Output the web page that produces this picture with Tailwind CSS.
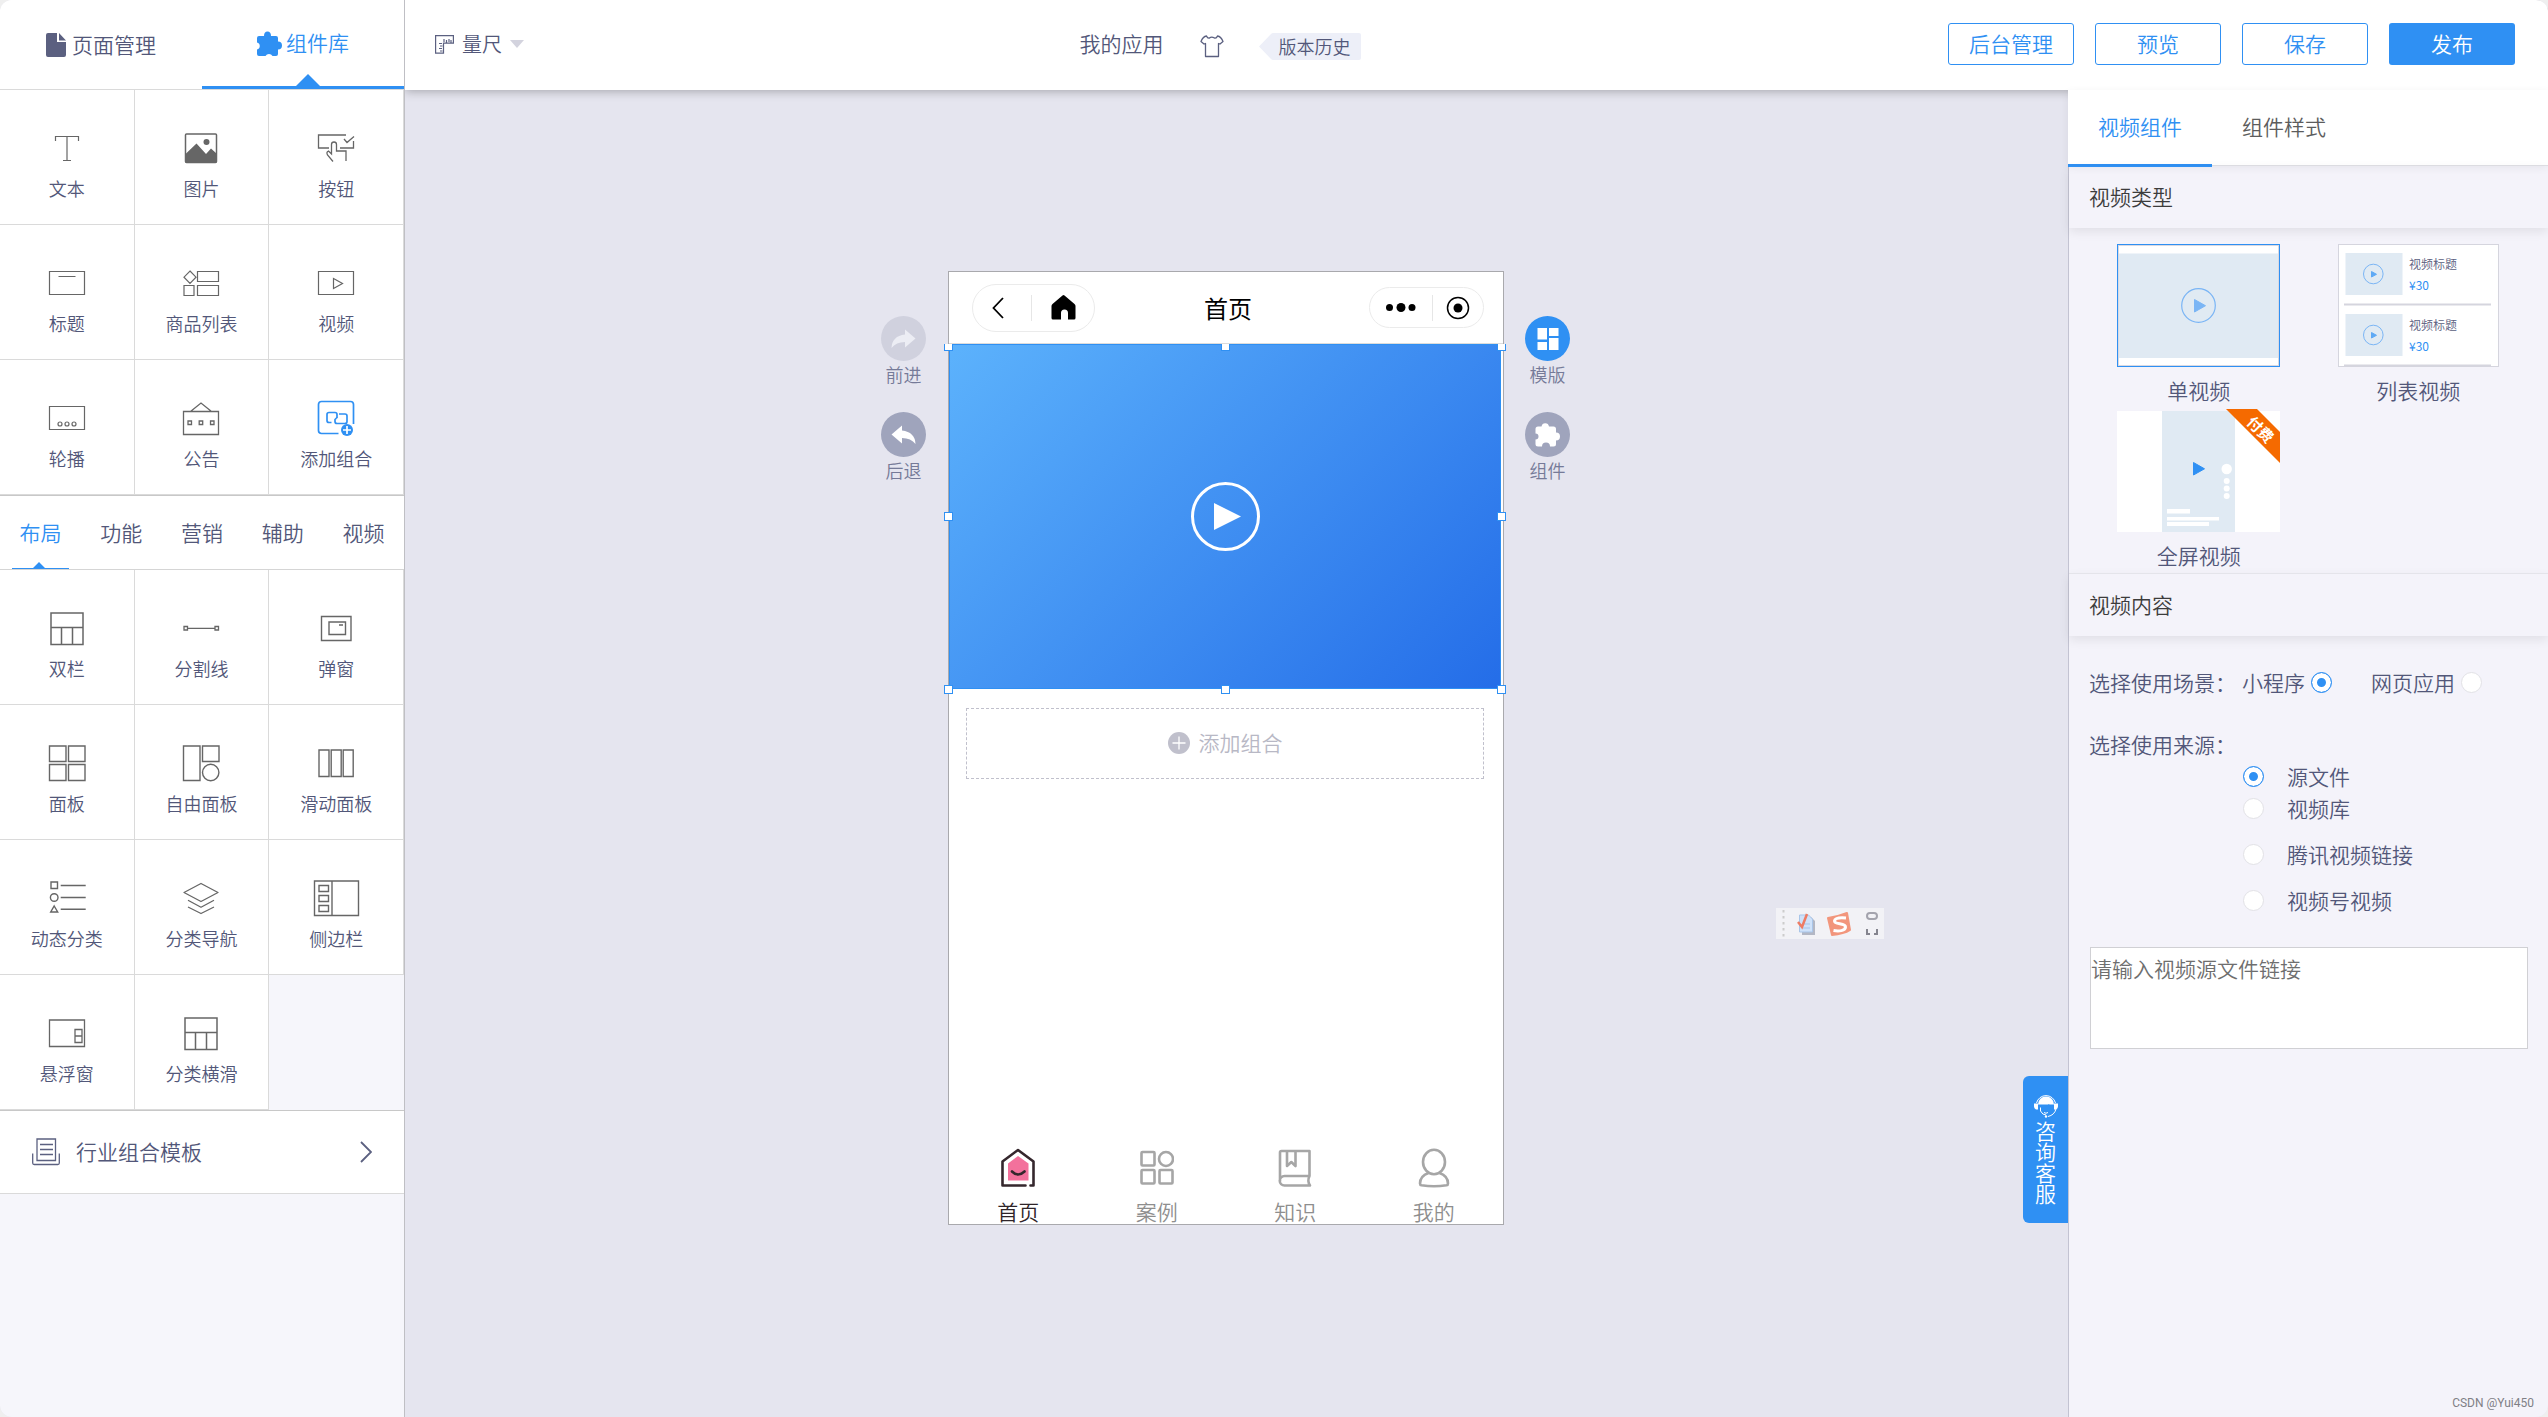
<!DOCTYPE html>
<html lang="zh-CN">
<head>
<meta charset="utf-8">
<meta name="viewport" content="width=device-width, initial-scale=1">
<title>我的应用</title>
<script src="https://cdn.jsdelivr.net/npm/@tailwindcss/browser@4"></script>
</head>
<body class="bg-[#efefef] font-['Noto_Sans_CJK_SC',sans-serif] font-[350] text-[#525779]">
<div class="flex min-h-screen overflow-hidden rounded-xl bg-[#e5e5ef]">

  <!-- Component library -->
  <aside class="relative z-20 w-[405px] shrink-0 border-r border-[#bfbfc4] bg-[#f6f6fb]">
    <nav class="flex h-[90px] border-b border-[#dadada] bg-white text-[21px]">
      <button class="flex flex-1 items-center justify-center gap-1.5">
        <svg class="h-6 w-5" viewBox="0 0 20 24" fill="#5b6080"><path d="M2 0h9v9h9v13a2 2 0 0 1-2 2H2a2 2 0 0 1-2-2V2a2 2 0 0 1 2-2zM13 0l7 7.500h-7z"/></svg>
        页面管理
      </button>
      <button class="relative flex flex-1 items-center justify-center gap-1 border-b-[3px] border-[#2f90f3] text-[#2f90f3]">
        <svg class="h-[25px] w-[25px]" viewBox="0 0 25 25" fill="#2f90f3"><path d="M7 5a3.500 4.500 0 0 1 7 0h5q2 0 2 2v3.500a3.500 3.500 0 0 1 0 8V23q0 2-2 2h-3.500a4 3.800 0 0 0-7 0H2q-2 0-2-2v-4.500a3.600 3.600 0 0 0 0-7V7q0-2 2-2z"/></svg>
        组件库
        <svg class="absolute bottom-0 left-[94px] h-3 w-6" viewBox="0 0 24 12" fill="#2f90f3"><path d="M12 0l12 12H0z"/></svg>
      </button>
    </nav>

    <div class="grid grid-cols-3 text-lg leading-7">
      <button class="flex h-[135px] flex-col items-center gap-0.5 border-r border-b border-[#dadada] bg-white pt-[34px]">
        <svg class="h-12 w-12 shrink-0" viewBox="0 0 48 48" fill="none" stroke="#666" stroke-width="1.200"><path d="M12.500 17v-4.500h23V17M24 12.500v24M20 36.500h8"/></svg>文本
      </button>
      <button class="flex h-[135px] flex-col items-center gap-0.5 border-r border-b border-[#dadada] bg-white pt-[34px]">
        <svg class="h-12 w-12 shrink-0" viewBox="0 0 48 48"><rect x="8.500" y="10" width="31" height="28.500" rx="1" fill="#fff" stroke="#666" stroke-width="1.500"/><path d="M8.500 30L19.500 19.500 29 30l5-5.500 5.500 5V38q0 1-1 1h-29q-1 0-1-1z" fill="#666"/><circle cx="29.500" cy="18" r="3" fill="#666"/></svg>图片
      </button>
      <button class="flex h-[135px] flex-col items-center gap-0.5 border-r border-b border-[#dadada] bg-white pt-[34px]">
        <svg class="h-12 w-12 shrink-0" viewBox="0 0 48 48" fill="none" stroke="#666" stroke-width="1.300"><path d="M34 11H6.500v13H17M32 15l3 3.500 7-6M41.500 17v7H28M21 37.500L15.500 31q-1.500-3 1-4l3 3V20.500a2.500 2.500 0 0 1 5 0V27H34v10"/></svg>按钮
      </button>
      <button class="flex h-[135px] flex-col items-center gap-0.5 border-r border-b border-[#dadada] bg-white pt-[34px]">
        <svg class="h-12 w-12 shrink-0" viewBox="0 0 48 48" fill="none" stroke="#666" stroke-width="1.200"><path d="M6.500 12.500h35v23h-35zM15.500 17.500h17"/></svg>标题
      </button>
      <button class="flex h-[135px] flex-col items-center gap-0.5 border-r border-b border-[#dadada] bg-white pt-[34px]">
        <svg class="h-12 w-12 shrink-0" viewBox="0 0 48 48" fill="none" stroke="#666" stroke-width="1.200"><path d="M13 12l6 6.200-6 6.200-6-6.200zM20.500 12.500h21v10h-21zM20.500 26.500h21v10h-21zM7 26.500h10v10H7z"/></svg>商品列表
      </button>
      <button class="flex h-[135px] flex-col items-center gap-0.5 border-r border-b border-[#dadada] bg-white pt-[34px]">
        <svg class="h-12 w-12 shrink-0" viewBox="0 0 48 48" fill="none" stroke="#666" stroke-width="1.200"><path d="M6.500 12.500h35v23h-35zM21.500 19.500v10l9-5z"/></svg>视频
      </button>
      <button class="flex h-[135px] flex-col items-center gap-0.5 border-r border-b border-[#dadada] bg-white pt-[34px]">
        <svg class="h-12 w-12 shrink-0" viewBox="0 0 48 48" fill="none" stroke="#666" stroke-width="1.200"><path d="M6.500 12.500h35v23h-35z"/><circle cx="17" cy="30" r="2"/><circle cx="24" cy="30" r="2"/><circle cx="31" cy="30" r="2"/></svg>轮播
      </button>
      <button class="flex h-[135px] flex-col items-center gap-0.5 border-r border-b border-[#dadada] bg-white pt-[34px]">
        <svg class="h-12 w-12 shrink-0" viewBox="0 0 48 48" fill="none" stroke="#666" stroke-width="1.300"><path d="M6.500 17.500h35v23h-35zM13.500 17.500L24 9l10.500 8.500M11 27h3.500v3.500H11zM22.200 27h3.500v3.500h-3.500zM33.500 27H37v3.500h-3.500z"/></svg>公告
      </button>
      <button class="flex h-[135px] flex-col items-center gap-0.5 border-r border-b border-[#dadada] bg-white pt-[34px]">
        <svg class="h-12 w-12 shrink-0" viewBox="0 0 48 48" fill="none" stroke="#2f90f3" stroke-width="1.700"><path d="M26.500 39.500H9.500q-3 0-3-3v-26q0-3 3-3h29q3 0 3 3V30"/><path d="M19.500 28.500H17q-2 0-2-2v-6q0-2 2-2h6q2 0 2 2V23q0 1-1 1M27 20h6q2 0 2 2v5.500q0 2-2 2h-8q-2 0-2-2V25.500l2.500-2.500"/><circle cx="35" cy="36" r="6" fill="#2f90f3" stroke="none"/><path d="M35 32v8M31 36h8" stroke="#fff"/></svg>添加组合
      </button>
    </div>

    <nav class="grid h-[75px] grid-cols-5 border-t border-b border-t-[#c8c8c8] border-b-[#d5d5d5] bg-white text-[21px]">
      <button class="relative flex items-center justify-center text-[#2f90f3]">布局
        <svg class="absolute bottom-0 left-3 h-[7px] w-[57px]" viewBox="0 0 57 7" fill="#2f90f3"><path d="M0 6h21l6-6 6 6h24v1H0z"/></svg>
      </button>
      <button>功能</button>
      <button>营销</button>
      <button>辅助</button>
      <button>视频</button>
    </nav>

    <div class="grid grid-cols-3 text-lg leading-7">
      <button class="flex h-[135px] flex-col items-center gap-0.5 border-r border-b border-[#dadada] bg-white pt-[34px]">
        <svg class="h-12 w-12 shrink-0" viewBox="0 0 48 48" fill="none" stroke="#666" stroke-width="1.500"><path d="M8 9h32v31.500H8zM8 23.500h32M18.500 23.500v17M29.500 23.500v17"/></svg>双栏
      </button>
      <button class="flex h-[135px] flex-col items-center gap-0.5 border-r border-b border-[#dadada] bg-white pt-[34px]">
        <svg class="h-12 w-12 shrink-0" viewBox="0 0 48 48" fill="none" stroke="#666" stroke-width="1.300"><path d="M7 22.500h3.500V26H7zM38 22.500h3.500V26H38zM10.500 24.300H38"/></svg>分割线
      </button>
      <button class="flex h-[135px] flex-col items-center gap-0.5 border-r border-b border-[#dadada] bg-white pt-[34px]">
        <svg class="h-12 w-12 shrink-0" viewBox="0 0 48 48" fill="none" stroke="#666" stroke-width="1.400"><path d="M9.500 12.500h29.500v24H9.500zM17 18h16.500v12.500H17zM27 21h4"/></svg>弹窗
      </button>
      <button class="flex h-[135px] flex-col items-center gap-0.5 border-r border-b border-[#dadada] bg-white pt-[34px]">
        <svg class="h-12 w-12 shrink-0" viewBox="0 0 48 48" fill="none" stroke="#666" stroke-width="1.400"><path d="M6.500 7H23v15.500H6.500zM25.500 7H42v15.500H25.500zM6.500 25.500H23v16H6.500zM25.500 25.500H42v16H25.500z"/></svg>面板
      </button>
      <button class="flex h-[135px] flex-col items-center gap-0.5 border-r border-b border-[#dadada] bg-white pt-[34px]">
        <svg class="h-12 w-12 shrink-0" viewBox="0 0 48 48" fill="none" stroke="#666" stroke-width="1.400"><path d="M6.500 7H23v34.500H6.500zM25.500 7H42v15.500H25.500z"/><circle cx="33.700" cy="33.500" r="8.200"/></svg>自由面板
      </button>
      <button class="flex h-[135px] flex-col items-center gap-0.5 border-r border-b border-[#dadada] bg-white pt-[34px]">
        <svg class="h-12 w-12 shrink-0" viewBox="0 0 48 48" fill="none" stroke="#666" stroke-width="1.400"><path d="M7 11h10v26.500H7zM19.200 11h10v26.500h-10zM31.200 11h10v26.500h-10z"/></svg>滑动面板
      </button>
      <button class="flex h-[135px] flex-col items-center gap-0.5 border-r border-b border-[#dadada] bg-white pt-[34px]">
        <svg class="h-12 w-12 shrink-0" viewBox="0 0 48 48" fill="none" stroke="#666" stroke-width="1.400"><path d="M8 8h6.500v6.500H8zM11.200 32l3.500 6H7.700zM17.700 11.500h25M17.700 23.500h25M17.700 35.200h25"/><circle cx="11.200" cy="23.500" r="3.800"/></svg>动态分类
      </button>
      <button class="flex h-[135px] flex-col items-center gap-0.5 border-r border-b border-[#dadada] bg-white pt-[34px]">
        <svg class="h-12 w-12 shrink-0" viewBox="0 0 48 48" fill="none" stroke="#666" stroke-width="1.300" stroke-linejoin="round"><path d="M24 9.500l17 9-17 9-17-9zM11 26.300l13 7 13-7M11 33l13 6.500L37 33"/></svg>分类导航
      </button>
      <button class="flex h-[135px] flex-col items-center gap-0.5 border-r border-b border-[#dadada] bg-white pt-[34px]">
        <svg class="h-12 w-12 shrink-0" viewBox="0 0 48 48" fill="none" stroke="#666" stroke-width="1.400"><path d="M2.500 7h44v34.500h-44zM20 7v34.500M7 11.500h9.500v6H7zM7 21.500h9.500v6H7zM7 31.500h9.500v6H7z"/></svg>侧边栏
      </button>
      <button class="flex h-[135px] flex-col items-center gap-0.5 border-r border-b border-[#dadada] bg-white pt-[34px]">
        <svg class="h-12 w-12 shrink-0" viewBox="0 0 48 48" fill="none" stroke="#666" stroke-width="1.300"><path d="M6.500 11h35v26.500h-35zM32 20.500h7v13h-7zM32 27h7"/></svg>悬浮窗
      </button>
      <button class="flex h-[135px] flex-col items-center gap-0.5 border-r border-b border-[#dadada] bg-white pt-[34px]">
        <svg class="h-12 w-12 shrink-0" viewBox="0 0 48 48" fill="none" stroke="#666" stroke-width="1.500"><path d="M8 9h32v31.500H8zM8 23.500h32M18.500 23.500v17M29.500 23.500v17"/></svg>分类横滑
      </button>
    </div>

    <button class="flex h-[84px] w-full items-center border-t border-b border-t-[#c8c8c8] border-b-[#dadada] bg-white pr-8 pl-8 text-[21px]">
      <svg class="h-7 w-7" viewBox="0 0 28 28" fill="none" stroke="#5b6080" stroke-width="1.300"><path d="M5 1h18.500v21.500H5zM8 6.500h13M8 11.500h13M8 16.500h13M.7 15.500V25q0 1.500 1.500 1.500h23.600q1.500 0 1.500-1.500v-9.500"/></svg>
      <span class="ml-4">行业组合模板</span>
      <svg class="ml-auto h-[22px] w-3" viewBox="0 0 12 22" fill="none" stroke="#5b6080" stroke-width="1.800"><path d="M1 1l10 10L1 21"/></svg>
    </button>
  </aside>

  <div class="flex min-w-0 flex-1 flex-col">
    <!-- Toolbar -->
    <header class="relative z-10 flex h-[90px] shrink-0 items-center justify-between bg-white pr-[33px] pb-0.5 pl-[30px] text-[21px] shadow-[0_1px_10px_rgba(0,0,0,0.3)]">
      <button class="flex items-center text-xl">
        <svg class="h-[19px] w-[19px]" viewBox="0 0 19 19" fill="none" stroke="#5b6080" stroke-width="1.200"><path d="M.6.6h17.800v7.600H8.500v10H.6zM9 4v3M11.500 5v3M14 4v3M16 5v3M4 8.500h3M5 11h2.500M4 13.500h3M5 16h2.500"/></svg>
        <span class="ml-2">量尺</span>
        <svg class="ml-2 h-2 w-3.5" viewBox="0 0 14 8" fill="#d3d3de"><path d="M0 0h14L7 8z"/></svg>
      </button>
      <div class="flex items-center pr-8">
        <h1>我的应用</h1>
        <button class="ml-9" aria-label="主题">
          <svg class="mt-1 block h-6 w-6" viewBox="0 0 24 24" fill="none" stroke="#5b6080" stroke-width="1.300" stroke-linejoin="round"><path d="M6.500 2q1 2.500 3 2 2-1.800 5 0 2 .500 3-2Q21 2.500 23 7.500L20 10l-1.500-.500V22.500H5.500V9.500L4 10 1 7.500Q3 2.500 6.500 2z"/></svg>
        </button>
        <button class="relative mt-1 ml-[35px] h-[27px] pr-2.5 pl-5 text-lg leading-[25px]">
          <svg class="absolute inset-0 h-full w-full" viewBox="0 0 102 27" preserveAspectRatio="none" fill="#edeff8"><path d="M0 13.500L12 1Q13 0 14 0H100q2 0 2 2v23q0 2-2 2H14q-1 0-2-1z"/></svg>
          <span class="relative">版本历史</span>
        </button>
      </div>
      <div class="flex gap-[21px]">
        <button class="h-[42px] w-[126px] rounded-[3px] border border-[#2f90f3] text-[#2f90f3]">后台管理</button>
        <button class="h-[42px] w-[126px] rounded-[3px] border border-[#2f90f3] text-[#2f90f3]">预览</button>
        <button class="h-[42px] w-[126px] rounded-[3px] border border-[#2f90f3] text-[#2f90f3]">保存</button>
        <button class="h-[42px] w-[126px] rounded-[3px] bg-[#2f90f3] text-white">发布</button>
      </div>
    </header>

    <div class="flex flex-1">
      <!-- Canvas -->
      <main class="relative flex flex-1 items-start justify-center pt-[181px] pr-[22px]">
        <div class="mt-[45px] mr-[22px] flex w-[45px] flex-col gap-6 text-lg leading-[27px] text-[#757a98]">
          <button class="flex flex-col items-center">
            <svg class="h-[45px] w-[45px]" viewBox="0 0 45 45"><circle cx="22.500" cy="22.500" r="22.500" fill="#d0d1de"/><path d="M24 13.500L34.500 22.500 24 31.500V26q-9 0-13.500 6Q11 20 24 18.500z" fill="#ecedf4"/></svg>
            <span>前进</span>
          </button>
          <button class="flex flex-col items-center">
            <svg class="h-[45px] w-[45px]" viewBox="0 0 45 45"><circle cx="22.500" cy="22.500" r="22.500" fill="#9fa4bc"/><path d="M21 13.500L10.500 22.500 21 31.500V26q9 0 13.500 6Q34 20 21 18.500z" fill="#fff"/></svg>
            <span>后退</span>
          </button>
        </div>

        <section class="flex min-h-[954px] w-[556px] flex-col border border-[#a9a9ad] bg-white">
          <div class="flex h-[72px] items-center border-b border-[#dcdcdc] pr-[19px] pl-[23px]">
            <div class="flex-1">
              <div class="flex h-12 w-[123px] items-center rounded-full border border-[#ebebeb]">
                <button class="flex w-[58px] justify-center pr-2" aria-label="返回"><svg class="h-[22px] w-3" viewBox="0 0 12 22" fill="none" stroke="#000" stroke-width="1.800"><path d="M11 1L1.500 11 11 21"/></svg></button>
                <span class="h-[26px] w-px bg-[#e6e6e6]"></span>
                <button class="flex flex-1 justify-center" aria-label="主页"><svg class="h-[25px] w-[25px]" viewBox="0 0 25 25"><path d="M11.500.500q1-.800 2 0l10 8.500q1 1 1 2v12q0 1.500-1.500 1.500h-6v-6.500a3.500 3.500 0 0 0-7 0v6.500H2Q.500 24.500.500 23V11q0-1 1-2z"/></svg></button>
              </div>
            </div>
            <h2 class="text-2xl font-normal text-black">首页</h2>
            <div class="flex flex-1 justify-end">
              <div class="flex h-[41px] w-[115px] items-center rounded-full border border-[#ebebeb]">
                <button class="flex w-[62px] justify-center" aria-label="更多"><svg class="h-[9px] w-[30px]" viewBox="0 0 30 9"><circle cx="3.500" cy="4.500" r="3.500"/><circle cx="15" cy="4.500" r="4.500"/><circle cx="26" cy="4.500" r="3.500"/></svg></button>
                <span class="h-[26px] w-px bg-[#e6e6e6]"></span>
                <button class="flex flex-1 justify-center" aria-label="关闭"><svg class="h-6 w-6" viewBox="0 0 24 24"><circle cx="12" cy="12" r="10.500" fill="none" stroke="#000" stroke-width="1.500"/><circle cx="12" cy="12" r="4.500"/></svg></button>
              </div>
            </div>
          </div>

          <!-- Selected video block with resize handles -->
          <div class="relative mr-0.5 flex h-[345px] items-center justify-center border border-[#2f90f3] bg-linear-[135deg] from-[#5cb2fc] to-[#246de8]">
            <button aria-label="播放"><svg class="h-[69px] w-[69px]" viewBox="0 0 69 69"><circle cx="34.500" cy="34.500" r="33" fill="none" stroke="#fff" stroke-width="3"/><path d="M23 21v27l27-13.500z" fill="#fff"/></svg></button>
            <i class="absolute -top-px -left-1.5 h-[7px] w-[9px] border border-t-0 border-[#2f90f3] bg-white"></i>
            <i class="absolute -top-px left-[271px] h-[7px] w-[9px] border border-t-0 border-[#2f90f3] bg-white"></i>
            <i class="absolute -top-px -right-1.5 h-[7px] w-[9px] border border-t-0 border-[#2f90f3] bg-white"></i>
            <i class="absolute top-[167px] -left-1.5 h-[9px] w-[9px] border border-[#2f90f3] bg-white"></i>
            <i class="absolute top-[167px] -right-1.5 h-[9px] w-[9px] border border-[#2f90f3] bg-white"></i>
            <i class="absolute -bottom-1.5 -left-1.5 h-[9px] w-[9px] border border-[#2f90f3] bg-white"></i>
            <i class="absolute -bottom-1.5 left-[271px] h-[9px] w-[9px] border border-[#2f90f3] bg-white"></i>
            <i class="absolute -right-1.5 -bottom-1.5 h-[9px] w-[9px] border border-[#2f90f3] bg-white"></i>
          </div>

          <button class="mt-[19px] mr-[19px] ml-[17px] flex h-[71px] items-center justify-center gap-[9px] border border-dashed border-[#c0c0cc] pb-0.5 text-[21px] text-[#b8b8c5]">
            <svg class="h-[22px] w-[22px]" viewBox="0 0 22 22"><circle cx="11" cy="11" r="11" fill="#c0c0cc"/><path d="M11 4.500v13M4.500 11h13" stroke="#fff" stroke-width="1.300"/></svg>
            添加组合
          </button>

          <nav class="mt-auto grid grid-cols-4 pb-0.5 text-[21px] leading-[22px] text-[#8e8e8e]">
            <a href="#" class="flex flex-col items-center gap-3 text-[#2e2428]">
              <svg class="h-10 w-[34px]" viewBox="0 0 34 40" fill="none" stroke="#35272d" stroke-width="2.600" stroke-linecap="round" stroke-linejoin="round"><path d="M24.500 37.500H1.500V13.500L17 2l15.500 11.500v24h-3"/><path d="M7 15.500L17 8l10.500 7.500v17H7z" fill="#f3719c" stroke="none"/><path d="M11 23.500q6 6 12.500 0"/></svg>首页
            </a>
            <a href="#" class="flex flex-col items-center gap-3">
              <svg class="h-10 w-[34px]" viewBox="0 0 34 40" fill="none" stroke="#a6a6a6" stroke-width="2.600"><rect x="1.500" y="4" width="13" height="13.500" rx="1"/><circle cx="26" cy="11" r="7"/><rect x="1.500" y="22" width="13" height="13.500" rx="1"/><rect x="19.500" y="22" width="13" height="13.500" rx="1"/></svg>案例
            </a>
            <a href="#" class="flex flex-col items-center gap-3">
              <svg class="h-10 w-[34px]" viewBox="0 0 34 40" fill="none" stroke="#a6a6a6" stroke-width="2.600" stroke-linecap="round" stroke-linejoin="round"><path d="M31.500 28H6.500a4.500 4.500 0 0 0 0 9.500H32q-3-4.500-.500-9.500V3h-28q-1.500 0-1.500 1.500V33M9 3v15l4.300-4 4.200 4V3"/></svg>知识
            </a>
            <a href="#" class="flex flex-col items-center gap-3">
              <svg class="h-10 w-[34px]" viewBox="0 0 34 40" fill="none" stroke="#a6a6a6" stroke-width="2.600"><ellipse cx="17" cy="14" rx="11" ry="12.300"/><path d="M11.500 25Q3 28 3 35.500q0 1.500 1.500 1.800 12.500 2 25 0 1.500-.300 1.500-1.800Q31 28 22.500 25"/></svg>我的
            </a>
          </nav>
        </section>

        <div class="mt-[45px] ml-[21px] flex w-[45px] flex-col gap-6 text-lg leading-[27px] text-[#757a98]">
          <button class="flex flex-col items-center">
            <svg class="h-[45px] w-[45px]" viewBox="0 0 45 45"><circle cx="22.500" cy="22.500" r="22.500" fill="#2f90f3"/><path d="M12.500 12h9.500v11.500h-9.500zM24 12h9.500v8H24zM12.500 26h9.500v8h-9.500zM24 22h9.500v12H24z" fill="#fff"/></svg>
            <span>模版</span>
          </button>
          <button class="flex flex-col items-center">
            <svg class="h-[45px] w-[45px]" viewBox="0 0 45 45"><circle cx="22.500" cy="22.500" r="22.500" fill="#9fa4bc"/><path d="M16.500 14.500a3.800 4 0 0 1 7.500 0h4.500q2.500 0 2.500 2.500v3.500a3.500 3.500 0 0 1 0 8V32q0 2.500-2.500 2.500h-3.500a4 4 0 0 0-8 0H13q-2.500 0-2.500-2.500v-4.500a3 3 0 0 0 0-6V17q0-2.500 2.500-2.500z" fill="#fff"/></svg>
            <span>组件</span>
          </button>
        </div>

        <!-- Floating input-method bar -->
        <div class="absolute top-[818px] right-[184px] h-[31px] w-[108px] bg-[#f2f2f6]">
          <svg class="h-full w-full" viewBox="0 0 108 31"><path d="M7.500 2v29" stroke="#ccc" stroke-width="2" stroke-dasharray="2.500 3.500"/><path d="M26 9h9l4 4v14H26z" fill="#b3b7c4"/><path d="M23.500 7h9l4 4v13h-13z" fill="#cfe2fa" stroke="#a9c5e8"/><path d="M27 16h7M27 20h7" stroke="#a9c5e8"/><path d="M22 14l4 5 5-13" fill="none" stroke="#ee7c64" stroke-width="2.500"/><path d="M52 10q9-1 19-5l3 17q-6 4-18 5z" fill="#f2967c" stroke="#f2967c" stroke-width="2" stroke-linejoin="round"/><path d="M70 10q-11-1-11.500 3c0 4 11 1.500 11 6 0 4-7 4.500-12 3.500" fill="none" stroke="#fff" stroke-width="3"/><rect x="91" y="5" width="10" height="6" rx="3" fill="none" stroke="#a3a3ad" stroke-width="2"/><path d="M91 21v5h3M101 21v5h-3" fill="none" stroke="#85858f" stroke-width="2"/></svg>
        </div>

        <button class="absolute top-[986px] right-0 flex h-[147px] w-[45px] flex-col items-center rounded-l-md bg-[#2f90f3] pt-[18px] text-[21px] leading-[21px] text-white">
          <svg class="mb-0.5 h-6 w-6 shrink-0" viewBox="0 0 24 24" fill="none" stroke="#fff"><path d="M2.500 9a9.800 9.800 0 0 1 19 0"/><path d="M4 10.500a8 8 0 0 1 16 0" stroke="none" fill="#fff"/><path d="M0 9.500h4v6H2q-2-1-2-3zM20 9.500h4v3q0 2-2 3h-2z" fill="#fff" stroke="none"/><path d="M6 15q5-.500 9-5 .500 3 3 4v3q-2 5-6 5t-6-5z" fill="#2f90f3" stroke="none"/><path d="M6.500 13.500V17q2 4 5.500 4M22 15q-1.500 6-8 7.500M10 18.500q2 1.500 4 0"/><circle cx="12" cy="22.500" r="1.200" fill="#fff" stroke="none"/></svg>
          <span class="w-[21px]">咨询客服</span>
        </button>
      </main>

      <!-- Properties -->
      <aside class="relative z-20 flex w-[480px] shrink-0 flex-col border-l border-[#c3c3d2] bg-[#f4f3fa] text-[21px]">
        <nav class="-ml-px flex h-[76px] border-b border-[#dfdfe4] bg-white shadow-[0_2px_8px_rgba(0,0,0,0.06)]">
          <button class="h-[77px] w-36 border-b-[3px] border-[#2f90f3] text-[#2f90f3]">视频组件</button>
          <button class="h-[77px] w-36 border-b-[3px] border-transparent text-[#5c5c5c]">组件样式</button>
        </nav>
        <h3 class="flex h-[62px] items-center pl-5 text-[#3c3c3c] shadow-[0_4px_10px_rgba(0,0,0,0.08)]">视频类型</h3>

        <div class="grid grid-cols-2 gap-y-0.5 pt-4 pr-5 pl-5 leading-[34px]">
          <button class="flex flex-col items-center gap-1.5">
            <svg class="h-[123px] w-[163px]" viewBox="0 0 163 123"><rect x=".5" y=".5" width="162" height="122" fill="#fff" stroke="#2f90f3"/><rect x="1.500" y="1.500" width="160" height="120" fill="none" stroke="#d9d9e2"/><path d="M2 9.500h159V114H2z" fill="#e0eaf3"/><circle cx="81.500" cy="61.500" r="16.800" fill="none" stroke="#7ab5f5" stroke-width="1.200"/><path d="M77.500 55.500v12.500l11-6.300z" fill="#7ab5f5" stroke="#7ab5f5" stroke-linejoin="round"/></svg>
            单视频
          </button>
          <button class="flex flex-col items-center gap-1.5">
            <svg class="h-[123px] w-[161px]" viewBox="0 0 161 123">
              <rect x=".5" y=".5" width="160" height="122" fill="#fff" stroke="#d5d5de"/>
              <g id="video-row"><path d="M7.500 9h57v42h-57z" fill="#e0eaf3"/><circle cx="35.300" cy="30" r="9.800" fill="none" stroke="#7ab5f5"/><path d="M33.500 27.500v5.500l5-2.700z" fill="#5ea9f5" stroke="#5ea9f5" stroke-linejoin="round"/><path d="M6 60.500h147" stroke="#d5d5de" stroke-width="2"/></g>
              <use href="#video-row" y="61"/>
              <text x="71" y="25" font-size="12" fill="#5b6080">视频标题</text><text x="71" y="46" font-size="12" font-weight="400" fill="#2f90f3">¥30</text>
              <text x="71" y="86" font-size="12" fill="#5b6080">视频标题</text><text x="71" y="107" font-size="12" font-weight="400" fill="#2f90f3">¥30</text>
            </svg>
            列表视频
          </button>
          <button class="flex flex-col items-center gap-1.5">
            <svg class="h-[123px] w-[163px] overflow-visible" viewBox="0 0 163 123"><path d="M0 2h163v121H0z" fill="#fff"/><path d="M45 2h73v121H45z" fill="#e0eaf3"/><path d="M76.500 53.500v12.500l11-6.200z" fill="#2f90f3" stroke="#2f90f3" stroke-linejoin="round"/><g fill="#fff"><circle cx="109.700" cy="60" r="5.200"/><circle cx="109.700" cy="72" r="3"/><circle cx="109.700" cy="79.500" r="3"/><circle cx="109.700" cy="87" r="3"/><path d="M50 100h23v4.500H50zM50 108h52v3.500H50zM50 113h42v4H50z"/></g><path d="M109 0h31l23 23v31z" fill="#f56a00"/><text x="143" y="26" font-size="15" font-weight="700" fill="#fff" text-anchor="middle" transform="rotate(45 143 21)">付费</text></svg>
            全屏视频
          </button>
        </div>

        <h3 class="mt-px flex h-[63px] items-center border-t border-[#e4e4ea] pl-5 text-[#3c3c3c] shadow-[0_4px_10px_rgba(0,0,0,0.08)]">视频内容</h3>

        <form class="flex flex-col pt-[30px] pr-5 pl-5 leading-8">
          <div class="flex" role="radiogroup" aria-label="选择使用场景">
            <span class="w-[153px] shrink-0">选择使用场景：</span>
            <label class="flex items-center gap-1.5">小程序<input type="radio" name="scene" checked class="h-[21px] w-[21px] appearance-none rounded-full border border-[#e2e2e6] bg-white checked:border-[#2f90f3] checked:bg-[#2f90f3] checked:shadow-[inset_0_0_0_5px_#fff]"></label>
            <label class="ml-[39px] flex items-center gap-1.5">网页应用<input type="radio" name="scene" class="h-[21px] w-[21px] appearance-none rounded-full border border-[#e2e2e6] bg-white checked:border-[#2f90f3] checked:bg-[#2f90f3] checked:shadow-[inset_0_0_0_5px_#fff]"></label>
          </div>
          <span class="mt-[30px]">选择使用来源：</span>
          <div class="flex flex-col pl-[154px]" role="radiogroup" aria-label="选择使用来源">
            <label class="flex items-center gap-[23px]"><input type="radio" name="source" checked class="h-[21px] w-[21px] appearance-none rounded-full border border-[#e2e2e6] bg-white checked:border-[#2f90f3] checked:bg-[#2f90f3] checked:shadow-[inset_0_0_0_5px_#fff]">源文件</label>
            <label class="flex items-center gap-[23px]"><input type="radio" name="source" class="h-[21px] w-[21px] appearance-none rounded-full border border-[#e2e2e6] bg-white checked:border-[#2f90f3] checked:bg-[#2f90f3] checked:shadow-[inset_0_0_0_5px_#fff]">视频库</label>
            <label class="mt-3.5 flex items-center gap-[23px]"><input type="radio" name="source" class="h-[21px] w-[21px] appearance-none rounded-full border border-[#e2e2e6] bg-white checked:border-[#2f90f3] checked:bg-[#2f90f3] checked:shadow-[inset_0_0_0_5px_#fff]">腾讯视频链接</label>
            <label class="mt-3.5 flex items-center gap-[23px]"><input type="radio" name="source" class="h-[21px] w-[21px] appearance-none rounded-full border border-[#e2e2e6] bg-white checked:border-[#2f90f3] checked:bg-[#2f90f3] checked:shadow-[inset_0_0_0_5px_#fff]">视频号视频</label>
          </div>
          <textarea aria-label="视频源文件链接" placeholder="请输入视频源文件链接" class="mt-[31px] ml-px h-[102px] resize-none border border-[#d0d0d4] bg-white pt-1 placeholder:text-[#6e6e6e]"></textarea>
        </form>

        <p class="mt-auto pr-3.5 pb-1 text-right font-[Roboto,sans-serif] text-xs leading-5 font-normal text-[#808086]">CSDN @Yui450</p>
      </aside>
    </div>
  </div>
</div>
</body>
</html>
